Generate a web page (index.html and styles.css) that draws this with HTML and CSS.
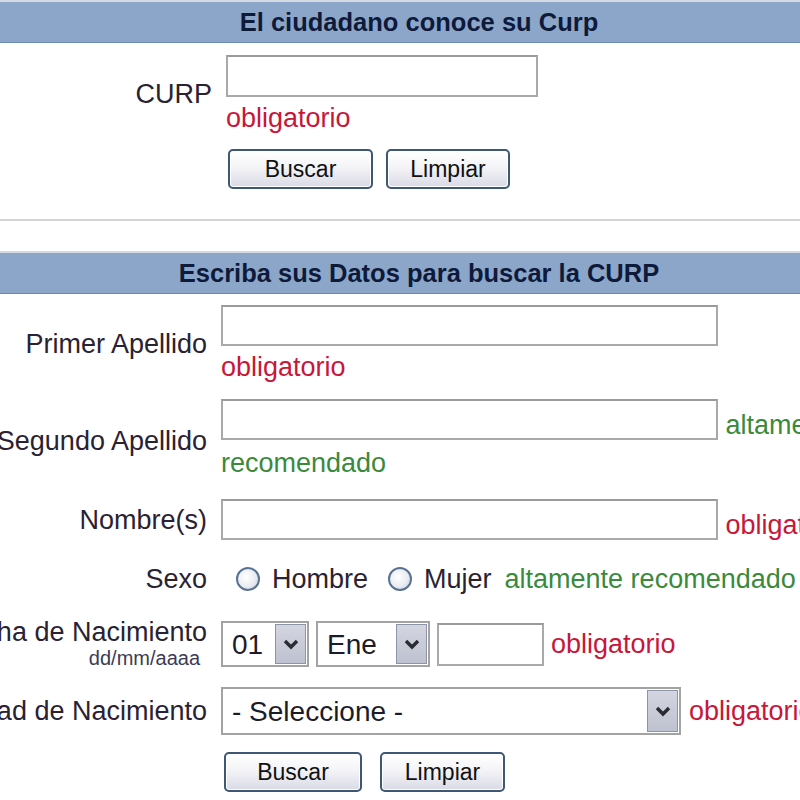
FILE: index.html
```html
<!DOCTYPE html>
<html lang="es">
<head>
  <meta charset="UTF-8" />
  <title>Consulta CURP</title>
  <link rel="stylesheet" href="styles.css">
</head>
<body>
  <!-- Busqueda directa por CURP -->
  <div class="panel">
    <div class="panel-title">El ciudadano conoce su Curp</div>
    <form class="form form-curp">
      <label class="label" for="curp">CURP</label>
      <div class="field">
        <input type="text" id="curp" class="text text-curp">
        <div class="req req-below">obligatorio</div>
      </div>
      <div class="label"></div>
      <div class="field buttons">
        <button type="button" class="btn btn-buscar">Buscar</button>
        <button type="reset" class="btn btn-limpiar">Limpiar</button>
      </div>
    </form>
  </div>

  <hr class="divider">

  <!-- Busqueda por datos personales -->
  <div class="panel">
    <div class="panel-title">Escriba sus Datos para buscar la CURP</div>
    <form class="form form-datos">
      <label class="label" for="ap1">Primer Apellido</label>
      <div class="field">
        <input type="text" id="ap1" class="text text-wide">
        <div class="req req-below">obligatorio</div>
      </div>

      <label class="label" for="ap2">Segundo Apellido</label>
      <div class="field field-wrap">
        <input type="text" id="ap2" class="text text-wide"> <span class="rec">altamente recomendado</span>
      </div>

      <label class="label" for="nombre">Nombre(s)</label>
      <div class="field">
        <input type="text" id="nombre" class="text text-wide"> <span class="req">obligatorio</span>
      </div>

      <div class="label">Sexo</div>
      <div class="field sexo">
        <label class="opt"><input type="radio" name="sexo" class="radio"> Hombre</label>
        <label class="opt"><input type="radio" name="sexo" class="radio"> Mujer</label>
        <span class="rec">altamente recomendado</span>
      </div>

      <div class="label label-fecha">
        <span>Fecha de Nacimiento</span>
        <span class="hint">dd/mm/aaaa</span>
      </div>
      <div class="field fecha">
        <div class="combo combo-dia">
          <select><option>01</option><option>02</option><option>03</option></select>
          <span class="arrow"><svg width="16" height="12" viewBox="0 0 16 12"><path d="M2 3 L8 9 L14 3" fill="none" stroke="#2b2b33" stroke-width="3.4"/></svg></span>
        </div>
        <div class="combo combo-mes">
          <select><option>Ene</option><option>Feb</option><option>Mar</option></select>
          <span class="arrow"><svg width="16" height="12" viewBox="0 0 16 12"><path d="M2 3 L8 9 L14 3" fill="none" stroke="#2b2b33" stroke-width="3.4"/></svg></span>
        </div>
        <input type="text" class="text text-anio">
        <span class="req">obligatorio</span>
      </div>

      <div class="label">Entidad de Nacimiento</div>
      <div class="field entidad">
        <div class="combo combo-entidad">
          <select><option>- Seleccione -</option></select>
          <span class="arrow"><svg width="16" height="12" viewBox="0 0 16 12"><path d="M2 3 L8 9 L14 3" fill="none" stroke="#2b2b33" stroke-width="3.4"/></svg></span>
        </div>
        <span class="req">obligatorio</span>
      </div>

      <div class="label"></div>
      <div class="field buttons">
        <button type="button" class="btn btn-buscar">Buscar</button>
        <button type="reset" class="btn btn-limpiar">Limpiar</button>
      </div>
    </form>
  </div>
</body>
</html>
```

FILE: styles.css
```css
/* Base */
body {
  margin: 0;
  overflow: hidden;
  background: #fff;
  font-family: "Liberation Sans", Arial, sans-serif;
  font-size: 27px;
  color: #2a2233;
}

/* Barras de titulo azules */
.panel-title {
  height: 40px;
  line-height: 40px;
  padding-left: 38px;
  background: #8ca6ca;
  border-top: 2px solid #d6dbe3;
  border-bottom: 1px solid #7089b0;
  text-align: center;
  font-size: 25.5px;
  font-weight: bold;
  color: #0e1a3a;
}

.divider {
  margin: 30px 0 30px;
  border: 0;
  height: 2px;
  background: #d3d3d3;
}

/* Formularios: columna de etiquetas + columna de campos */
.form {
  display: grid;
  align-items: center;
}
.form-curp {
  grid-template-columns: 212px 600px;
  column-gap: 14px;
  row-gap: 16px;
  padding-top: 12px;
}
.form-datos {
  grid-template-columns: 207px 660px;
  column-gap: 14px;
  row-gap: 17px;
  padding-top: 11px;
}

.label {
  display: flex;
  flex-direction: column;
  align-items: flex-end;
  white-space: nowrap;
  line-height: 30px;
}
.label-fecha {
  line-height: 28px;
}
.label .hint {
  font-size: 20px;
  line-height: 24px;
  margin-right: 7px;
  color: #3b3b55;
}

.field {
  line-height: 30px;
}
.field-wrap {
  line-height: 38px;
}

.req {
  color: #c8173a;
}
.req-below {
  margin-top: 6px;
}
.rec {
  color: #3b8a3b;
}

/* Cajas de texto */
.text {
  box-sizing: border-box;
  height: 41px;
  padding: 0 6px;
  border: 2px solid #a9a9a9;
  border-top-color: #9a9a9a;
  background: #fff;
  font: 24px "Liberation Sans", Arial, sans-serif;
  vertical-align: text-bottom;
}
.text-curp { width: 312px; height: 42px; }
.text-wide { width: 497px; }
.text-anio { width: 107px; height: 43px; }

/* Botones */
.buttons {
  display: flex;
  gap: 13px;
  padding-left: 2px;
}
.btn {
  box-sizing: border-box;
  height: 40px;
  border: 2px solid #3d5775;
  border-radius: 5px;
  background: linear-gradient(#ffffff 0%, #f4f4f7 45%, #d9dae6 100%);
  box-shadow: inset 0 0 0 1px #fff;
  font: 23px "Liberation Sans", Arial, sans-serif;
  color: #111;
  cursor: pointer;
}
.btn-buscar { width: 145px; }
.btn-limpiar { width: 124px; }
.form-datos .buttons { gap: 18px; padding-left: 3px; }
.form-datos .btn-buscar { width: 138px; }
.form-datos .btn-limpiar { width: 125px; }

/* Sexo */
.sexo {
  display: flex;
  align-items: center;
  height: 44px;
  padding-left: 15px;
}
.opt {
  display: flex;
  align-items: center;
  gap: 12px;
  margin-right: 20px;
}
.opt + .opt { margin-right: 13px; }
.radio {
  appearance: none;
  margin: 0;
  width: 24px;
  height: 24px;
  border: 2px solid #587392;
  border-radius: 50%;
  background: radial-gradient(circle at 40% 40%, #ffffff 0%, #e9ecf1 55%, #c9cfd9 100%);
}

/* Listas desplegables */
.fecha, .entidad {
  display: flex;
  align-items: center;
  gap: 7px;
}
.entidad { gap: 8px; }
.combo {
  position: relative;
  box-sizing: border-box;
  height: 46px;
  border: 2px solid #a3a3a3;
  background: #fff;
}
.combo select {
  appearance: none;
  width: 100%;
  height: 100%;
  margin: 0;
  padding: 0 0 0 9px;
  border: 0;
  background: #fff;
  font: 28px "Liberation Sans", Arial, sans-serif;
  color: #1c1c28;
}
.combo .arrow {
  position: absolute;
  top: 1px;
  right: 1px;
  bottom: 1px;
  width: 31px;
  box-sizing: border-box;
  border: 1px solid #8e94a8;
  background: linear-gradient(#d3d6e1, #bec1cf);
  display: flex;
  align-items: center;
  justify-content: center;
  pointer-events: none;
}
.combo-dia { width: 88px; }
.combo-mes { width: 114px; }
.combo-entidad { width: 460px; height: 48px; }
```
